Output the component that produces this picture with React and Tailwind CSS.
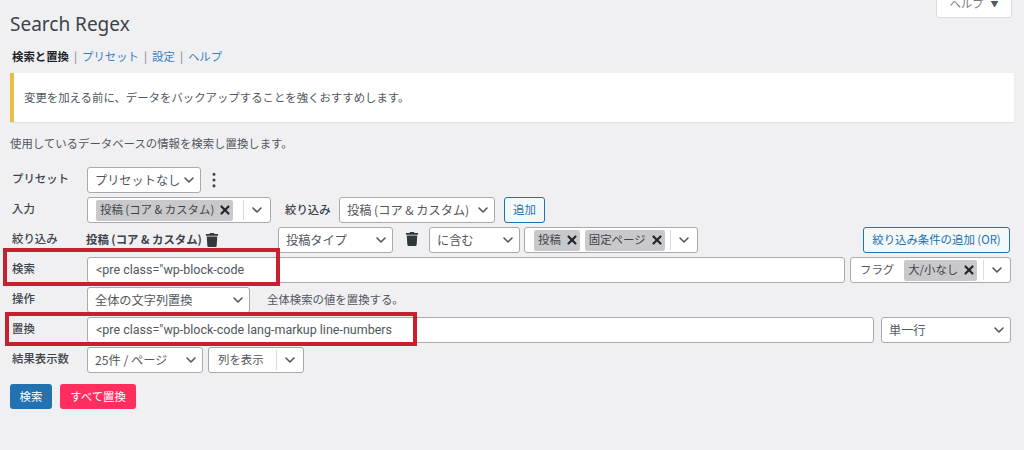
import React from 'react';
import { ChevronDown, X, EllipsisVertical } from 'lucide-react';
import { FaTrash } from 'react-icons/fa';

const font = "font-['Noto_Sans_CJK_JP','Noto_Sans',sans-serif]";

const Chevron = () => (
  <ChevronDown size={16} strokeWidth={2.4} className="shrink-0 text-[#50575e]" />
);

const Tag = ({ children }) => (
  <span className="flex h-[21px] items-center gap-[4px] rounded-[2px] bg-[#c9c9cb] pl-[4px] pr-[1px] text-[11.4px] text-[#3c434a]">
    {children}
    <X size={14} strokeWidth={3.8} className="text-[#23282d]" />
  </span>
);

const Select = ({ children, className = '' }) => (
  <div className={`flex h-[26px] items-center justify-between rounded-[3px] border border-[#a7aaad] bg-white pl-[7px] pr-[3px] text-[12.2px] text-[#50575e] ${className}`}>
    <span className="whitespace-nowrap">{children}</span>
    <Chevron />
  </div>
);

const Multi = ({ children, className = '' }) => (
  <div className={`flex h-[26px] items-center justify-between rounded-[3px] border border-[#a7aaad] bg-white pl-[8px] pr-[5px] text-[11.4px] text-[#50575e] ${className}`}>
    <div className="flex items-center gap-[5px] whitespace-nowrap">{children}</div>
    <div className="flex h-[20px] items-center border-l border-[#dcdcde] pl-[5px]">
      <Chevron />
    </div>
  </div>
);

const Text = ({ children, className = '' }) => (
  <div className={`flex h-[26px] items-center rounded-[3px] border border-[#a7aaad] bg-white pl-[8px] text-[12.5px] text-[#50575e] ${className}`}>
    <span className="font-['Roboto',sans-serif] whitespace-nowrap">{children}</span>
  </div>
);

const Row = ({ label, children }) => (
  <div className="flex items-center">
    <div className="mb-[3px] w-[77px] shrink-0 pl-[2px] text-[11.4px] font-medium text-[#3c434a]">{label}</div>
    {children}
  </div>
);

const App = () => {
  return (
    <div className={`relative h-[450px] w-[1024px] overflow-hidden bg-[#f0f0f2] ${font}`}>
      <div className="absolute right-[12px] top-[-10px] flex h-[28px] w-[76px] items-center justify-center gap-[7px] rounded-b-[3px] border border-[#dcdcde] bg-white text-[11.4px] text-[#787c82]">
        ヘルプ
        <span className="text-[8px] text-[#50575e]">▼</span>
      </div>

      <div className="px-[10px]">
        <h1 className="pt-[10px] font-['Noto_Sans',sans-serif] text-[19px] leading-[28px] text-[#3c434a]">Search Regex</h1>

        <nav className="mt-[10px] flex h-[18px] items-center gap-[5px] pl-[2px] text-[11.4px] text-[#3582c4]">
          <span className="font-bold text-[#1d2327]">検索と置換</span>
          <span className="text-[#787c82]">|</span>
          <span>プリセット</span>
          <span className="text-[#787c82]">|</span>
          <span>設定</span>
          <span className="text-[#787c82]">|</span>
          <span>ヘルプ</span>
        </nav>

        <div className="mt-[7px] flex h-[49px] items-center border-l-[4px] border-[#e8bd45] bg-white pl-[10px] text-[11.4px] text-[#50575e] shadow-[0_1px_1px_rgba(0,0,0,0.06)]">
          変更を加える前に、データをバックアップすることを強くおすすめします。
        </div>

        <p className="mt-[12px] h-[18px] text-[11.4px] leading-[18px] text-[#50575e]">使用しているデータベースの情報を検索し置換します。</p>

        <div className="mt-[15px] flex flex-col gap-[4px]">
          <Row label="プリセット">
            <Select className="w-[114px]">プリセットなし</Select>
            <EllipsisVertical size={20} strokeWidth={1.7} className="ml-[3px] text-[#3c434a]" />
          </Row>

          <Row label="入力">
            <Multi className="w-[184px]">
              <Tag>投稿 (コア &amp; カスタム)</Tag>
            </Multi>
            <span className="ml-[14px] w-[54px] text-[11.4px] font-medium text-[#3c434a]">絞り込み</span>
            <Select className="w-[156px]">投稿 (コア &amp; カスタム)</Select>
            <button className="ml-[9px] h-[26px] w-[41px] rounded-[3px] border border-[#2271b1] bg-[#f3f8fb] text-[11.4px] text-[#2271b1]">追加</button>
          </Row>

          <Row label="絞り込み">
            <div className="-ml-px flex w-[192px] items-center gap-[3px]">
              <span className="text-[11.4px] font-bold text-[#3c434a]">投稿 (コア &amp; カスタム)</span>
              <FaTrash size={14} className="text-[#32373c]" />
            </div>
            <Select className="w-[115px]">投稿タイプ</Select>
            <FaTrash size={14} className="mb-[2px] ml-[12px] text-[#32373c]" />
            <Select className="ml-[10px] w-[91px]">に含む</Select>
            <Multi className="ml-[4px] w-[174px] !pl-[9px]">
              <Tag>投稿</Tag>
              <Tag>固定ページ</Tag>
            </Multi>
            <button className="ml-auto mr-[4px] h-[26px] w-[147px] rounded-[3px] border border-[#2271b1] bg-[#f3f8fb] text-[11.4px] text-[#2271b1]">絞り込み条件の追加 (OR)</button>
          </Row>

          <Row label="検索">
            <Text className="w-[758px]">&lt;pre class="wp-block-code</Text>
            <Multi className="ml-[5px] w-[161px] !pl-[9px]">
              <span className="mr-[5px]">フラグ</span>
              <Tag>大/小なし</Tag>
            </Multi>
          </Row>

          <Row label="操作">
            <Select className="w-[163px]">全体の文字列置換</Select>
            <span className="ml-[17px] text-[11.4px] text-[#50575e]">全体検索の値を置換する。</span>
          </Row>

          <Row label="置換">
            <Text className="w-[787px]">&lt;pre class="wp-block-code lang-markup line-numbers</Text>
            <Select className="ml-[7px] w-[130px]">単一行</Select>
          </Row>

          <Row label="結果表示数">
            <Select className="w-[116px]">25件 / ページ</Select>
            <Multi className="ml-[5px] w-[96px]">
              <span className="ml-[1px]">列を表示</span>
            </Multi>
          </Row>
        </div>

        <div className="mt-[11px] flex gap-[8px]">
          <button className="h-[25px] w-[42px] rounded-[3px] bg-[#2271b1] text-[11.4px] text-white">検索</button>
          <button className="h-[25px] w-[76px] rounded-[3px] bg-[#ff2e5f] text-[11.4px] text-white">すべて置換</button>
        </div>
      </div>

      {/* red annotation boxes drawn over the screenshot */}
      <div className="absolute left-[3px] top-[248px] h-[38px] w-[277px] border-[4px] border-[#c8202f]" />
      <div className="absolute left-[5px] top-[312px] h-[34px] w-[412px] border-[4px] border-[#c8202f]" />
    </div>
  );
};

export default App;
